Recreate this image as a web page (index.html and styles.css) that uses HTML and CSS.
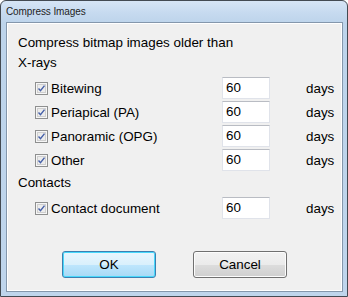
FILE: index.html
```html
<!DOCTYPE html>
<html>
<head>
<meta charset="utf-8">
<link rel="stylesheet" href="styles.css">
</head>
<body>
<div class="window">
  <div class="titlebar">Compress Images</div>
  <div class="client">
    <div class="heading">Compress bitmap images older than</div>
    <div class="group">X-rays</div>
    <div class="row first">
      <label class="label"><svg class="check" width="13" height="13" viewBox="0 0 13 13"><rect x="0.5" y="0.5" width="12" height="12" fill="#f6f6f6" stroke="#8e8f8f"/><rect x="2.5" y="2.5" width="8" height="8" fill="#ececec" stroke="#cfcfcf"/><path d="M3.5 6.5 L5.5 8.7 L9.5 3.6" fill="none" stroke="#4660a8" stroke-width="1.4"/></svg><span>Bitewing</span></label>
      <div class="num">60</div>
      <div class="days">days</div>
    </div>
    <div class="row">
      <label class="label"><svg class="check" width="13" height="13" viewBox="0 0 13 13"><rect x="0.5" y="0.5" width="12" height="12" fill="#f6f6f6" stroke="#8e8f8f"/><rect x="2.5" y="2.5" width="8" height="8" fill="#ececec" stroke="#cfcfcf"/><path d="M3.5 6.5 L5.5 8.7 L9.5 3.6" fill="none" stroke="#4660a8" stroke-width="1.4"/></svg><span>Periapical (PA)</span></label>
      <div class="num">60</div>
      <div class="days">days</div>
    </div>
    <div class="row">
      <label class="label"><svg class="check" width="13" height="13" viewBox="0 0 13 13"><rect x="0.5" y="0.5" width="12" height="12" fill="#f6f6f6" stroke="#8e8f8f"/><rect x="2.5" y="2.5" width="8" height="8" fill="#ececec" stroke="#cfcfcf"/><path d="M3.5 6.5 L5.5 8.7 L9.5 3.6" fill="none" stroke="#4660a8" stroke-width="1.4"/></svg><span>Panoramic (OPG)</span></label>
      <div class="num">60</div>
      <div class="days">days</div>
    </div>
    <div class="row">
      <label class="label"><svg class="check" width="13" height="13" viewBox="0 0 13 13"><rect x="0.5" y="0.5" width="12" height="12" fill="#f6f6f6" stroke="#8e8f8f"/><rect x="2.5" y="2.5" width="8" height="8" fill="#ececec" stroke="#cfcfcf"/><path d="M3.5 6.5 L5.5 8.7 L9.5 3.6" fill="none" stroke="#4660a8" stroke-width="1.4"/></svg><span>Other</span></label>
      <div class="num">60</div>
      <div class="days">days</div>
    </div>
    <div class="group contacts">Contacts</div>
    <div class="row first">
      <label class="label"><svg class="check" width="13" height="13" viewBox="0 0 13 13"><rect x="0.5" y="0.5" width="12" height="12" fill="#f6f6f6" stroke="#8e8f8f"/><rect x="2.5" y="2.5" width="8" height="8" fill="#ececec" stroke="#cfcfcf"/><path d="M3.5 6.5 L5.5 8.7 L9.5 3.6" fill="none" stroke="#4660a8" stroke-width="1.4"/></svg><span>Contact document</span></label>
      <div class="num">60</div>
      <div class="days">days</div>
    </div>
    <div class="buttons">
      <div class="btn default">OK</div>
      <div class="btn">Cancel</div>
    </div>
  </div>
</div>
</body>
</html>
```

FILE: styles.css
```css
html, body {
  margin: 0;
  padding: 0;
  background: #ffffff;
}

.window {
  width: 348px;
  height: 297px;
  box-sizing: border-box;
  border: 1px solid #434a52;
  border-radius: 6px 6px 0 0;
  background: linear-gradient(180deg, #d6e5f5 0px, #c6daef 12px, #bdd4eb 22px, #bfd5ec 100%);
  display: flex;
  flex-direction: column;
  font-family: "Liberation Sans", Arial, sans-serif;
  color: #000;
}

.titlebar {
  height: 21px;
  display: flex;
  align-items: center;
  padding-left: 5px;
  font-size: 10px;
  color: #1e1e1e;
  letter-spacing: -0.1px;
}

.client {
  flex: 1;
  margin: 0 4px 4px 5px;
  border: 1px solid #8497ac;
  background: #f0f0f0;
  box-shadow: inset 0 0 0 1px #ffffff;
  padding-top: 10px;
  display: flex;
  flex-direction: column;
  font-size: 13.4px;
}

.heading,
.group {
  height: 20px;
  line-height: 20px;
  padding-left: 11px;
}

.contacts {
  margin-top: 1px;
}

.row {
  height: 24px;
  display: flex;
  align-items: center;
  padding-left: 28px;
}

.row.first {
  margin-top: 3px;
}

.label {
  width: 187px;
  display: flex;
  align-items: center;
  gap: 3px;
}

.check {
  display: block;
  flex: none;
}

.num {
  width: 48px;
  height: 22px;
  box-sizing: border-box;
  background: #ffffff;
  border: 1px solid #e0e3ea;
  border-top-color: #b9bcc3;
  padding-left: 3px;
  line-height: 20px;
}

.days {
  margin-left: 36px;
}

.buttons {
  margin-top: 31px;
  display: flex;
  justify-content: center;
  gap: 37px;
}

.btn {
  width: 94px;
  height: 27px;
  box-sizing: border-box;
  border: 1px solid #707070;
  border-radius: 3px;
  background: linear-gradient(180deg, #f2f2f2 0%, #ebebeb 50%, #dddddd 51%, #cfcfcf 100%);
  box-shadow: inset 0 0 0 1px #fcfcfc;
  display: flex;
  align-items: center;
  justify-content: center;
  font-size: 13.4px;
}

.btn.default {
  border-color: #3c7fb1;
  background: linear-gradient(180deg, #eaf6fd 0%, #d9f0fc 50%, #bee6fd 51%, #a7d9f5 100%);
  box-shadow: inset 0 0 0 1px #48d8fb;
}
```
